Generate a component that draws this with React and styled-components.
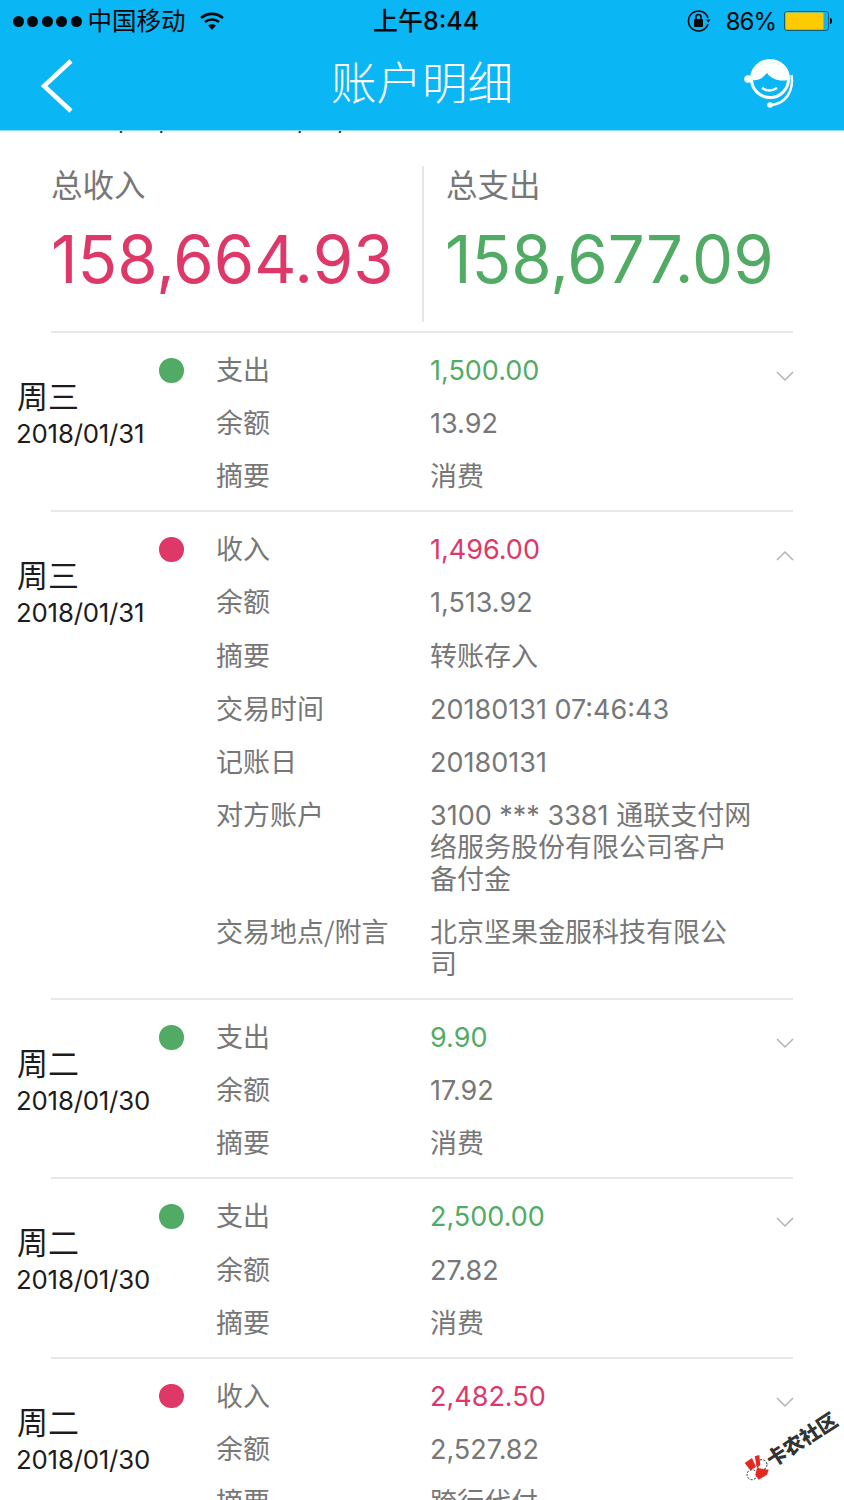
import React from "react";
import styled, { createGlobalStyle } from "styled-components";

const CJK = `"Noto Sans CJK SC", sans-serif`;
const FONT = `"Inter", "Noto Sans CJK SC", sans-serif`;
const RED = "#de3868";
const GREEN = "#52ab64";

const Global = createGlobalStyle`
  html, body { margin: 0; padding: 0; background: #fff; }
  * { box-sizing: border-box; }
`;

const Page = styled.div`
  position: relative;
  width: 844px;
  height: 1500px;
  overflow: hidden;
  background: #fff;
  font-family: ${FONT};
`;

const Header = styled.header`
  height: 131px;
  background: #0bb6f5;
  border-bottom: 1px solid #8fdcf9;
`;

const StatusBar = styled.div`
  height: 42px;
  display: grid;
  grid-template-columns: 1fr auto 1fr;
  align-items: center;
  color: #05080a;
`;

const StatusLeft = styled.div`
  display: flex;
  align-items: center;
  padding-left: 13px;
`;

const Dots = styled.div`
  display: flex;
  gap: 3.4px;
  margin-right: 6px;
`;

const Dot = styled.span`
  width: 11px;
  height: 11px;
  border-radius: 50%;
  background: #05080a;
`;

const Carrier = styled.span`
  font-size: 24.5px;
  font-family: ${CJK};
  line-height: 28px;
  padding-bottom: 2px;
  margin-right: 13px;
`;

const Clock = styled.div`
  font-size: 25px;
  font-weight: 500;
  line-height: 30px;
  padding-left: 8px;
`;

const StatusRight = styled.div`
  display: flex;
  align-items: center;
  justify-content: flex-end;
  padding-right: 12px;
`;

const Percent = styled.span`
  font-size: 24px;
  letter-spacing: -1px;
  margin: 0 8px 0 15px;
`;

const Nav = styled.div`
  height: 88px;
  display: grid;
  grid-template-columns: 1fr auto 1fr;
  align-items: center;
`;

const BackWrap = styled.div`
  display: flex;
  padding-left: 40px;
`;

const Title = styled.h1`
  margin: 0;
  font-family: ${CJK};
  font-size: 45.5px;
  font-weight: 300;
  color: #fff;
  line-height: 50px;
  padding-bottom: 12px;
`;

const HelpWrap = styled.div`
  display: flex;
  justify-content: flex-end;
  padding: 0 48px 8px 0;
`;

const ClippedRange = styled.div`
  height: 3px;
  overflow: hidden;
  display: flex;
  gap: 34px;
  padding-left: 55px;
  font-size: 26px;
  letter-spacing: 1.3px;
  color: #333;
`;

const ClippedDate = styled.span`
  display: block;
  line-height: 30px;
  margin-top: -25px;
`;

const Summary = styled.section`
  display: grid;
  grid-template-columns: 422px 1fr;
  margin-top: 32px;
  height: 156px;
`;

const SummaryCell = styled.div`
  padding-left: ${(p) => (p.$right ? 22 : 51)}px;
  border-left: ${(p) => (p.$right ? "2px solid #e6e6e6" : "none")};
`;

const SummaryLabel = styled.div`
  font-family: ${CJK};
  font-size: 31.5px;
  line-height: 34px;
  color: #777;
`;

const SummaryValue = styled.div`
  margin-top: 23px;
  margin-left: ${(p) => (p.$right ? -1 : 0)}px;
  font-size: 65.3px;
  line-height: 74px;
  white-space: nowrap;
  color: ${(p) => p.$color};
`;

const Rule = styled.hr`
  margin: ${(p) => p.$top || 0}px 51px 0;
  border: 0;
  height: 2px;
  background: #e8e8e8;
`;

const Entry = styled.article`
  display: grid;
  grid-template-columns: 159px 58px 214px 345px 1fr;
  padding: 22px 0 17px;
`;

const DateCol = styled.div`
  padding: 22px 0 0 17px;
  color: #1c1c1c;
`;

const Weekday = styled.div`
  font-family: ${CJK};
  font-size: 31px;
  line-height: 36px;
`;

const DateText = styled.div`
  margin-left: -1px;
  font-size: 25.8px;
  line-height: 42px;
  letter-spacing: -0.2px;
  white-space: nowrap;
`;

const Marker = styled.span`
  display: block;
  width: 24.5px;
  height: 24.5px;
  margin-top: 3px;
  border-radius: 50%;
  background: ${(p) => p.$color};
`;

const Fields = styled.dl`
  grid-column: 3 / 5;
  margin: 0;
  display: grid;
  grid-template-columns: 214px 1fr;
  row-gap: 21.15px;
`;

const Label = styled.dt`
  font-family: ${CJK};
  font-size: 27px;
  line-height: 28px;
  padding-bottom: 4px;
  margin-left: -1px;
  color: #777;
  white-space: nowrap;
`;

const Value = styled.dd`
  margin: 0 0 0 -1px;
  max-width: 322px;
  font-size: 27px;
  line-height: 32px;
  color: ${(p) => p.$color || "#777"};
`;

const Chevron = styled.svg`
  display: block;
  margin-top: 16px;
`;

const Watermark = styled.div`
  position: absolute;
  left: 744px;
  top: 1453px;
  display: flex;
  align-items: center;
  gap: 0;
  transform: rotate(-33deg);
  transform-origin: 13px 15px;
`;

const WatermarkText = styled.span`
  font-family: ${CJK};
  font-size: 20px;
  font-weight: 900;
  color: #333;
  line-height: 30px;
  white-space: nowrap;
`;

const entries = [
  { day: "周三", date: "2018/01/31", color: GREEN, rows: [["支出", "1,500.00"], ["余额", "13.92"], ["摘要", "消费"]] },
  {
    day: "周三", date: "2018/01/31", color: RED, open: true,
    rows: [
      ["收入", "1,496.00"], ["余额", "1,513.92"], ["摘要", "转账存入"],
      ["交易时间", "20180131 07:46:43"], ["记账日", "20180131"],
      ["对方账户", "3100 *** 3381 通联支付网络服务股份有限公司客户备付金"],
      ["交易地点/附言", "北京坚果金服科技有限公司"],
    ],
  },
  { day: "周二", date: "2018/01/30", color: GREEN, rows: [["支出", "9.90"], ["余额", "17.92"], ["摘要", "消费"]] },
  { day: "周二", date: "2018/01/30", color: GREEN, rows: [["支出", "2,500.00"], ["余额", "27.82"], ["摘要", "消费"]] },
  { day: "周二", date: "2018/01/30", color: RED, rows: [["收入", "2,482.50"], ["余额", "2,527.82"], ["摘要", "跨行代付"]] },
];

const WifiIcon = () => (
  <svg width="26" height="20" viewBox="0 0 26 20" fill="none" stroke="#05080a" strokeWidth="2.6">
    <path d="M2 7c6.5-5.5 15.500-5.500 22 0" />
    <path d="M6 11c4-3.400 10-3.400 14 0" />
    <path d="M13 19l-4-4.500c2.300-1.700 5.700-1.700 8 0z" fill="#05080a" stroke="none" />
  </svg>
);

const LockIcon = () => (
  <svg width="24" height="24" viewBox="0 0 24 24" fill="none">
    <path d="M21 15a10 10 0 1 1 0-6" stroke="#05080a" strokeWidth="1.500" />
    <path d="M19 10.500l4.500 0-2.200 3z" fill="#05080a" />
    <rect x="7" y="10" width="9" height="8" rx="1" fill="#05080a" />
    <path d="M9 10V8a2.500 2.500 0 0 1 5 0v2" stroke="#05080a" strokeWidth="1.600" />
  </svg>
);

const BatteryIcon = () => (
  <svg width="48" height="20" viewBox="0 0 48 20">
    <rect x="0.500" y="0.500" width="44" height="19" rx="2.500" fill="none" stroke="#0f5f80" />
    <rect x="1.500" y="1.500" width="38" height="17" rx="1" fill="#fdcb00" />
    <path d="M46 7c1.500 0 2 1 2 3s-.5 3-2 3z" fill="#05080a" />
  </svg>
);

const BackIcon = () => (
  <svg width="34" height="54" viewBox="0 0 34 54" fill="none" stroke="#fff" strokeWidth="4.500">
    <path d="M31 2L4 27l27 25" />
  </svg>
);

const HelpIcon = () => (
  <svg width="52" height="54" viewBox="0 0 52 54" fill="none">
    <circle cx="26" cy="24" r="18.500" stroke="#fff" strokeWidth="3" />
    <path d="M8 25A18 18 0 0 1 44 25C36 27 27 24 23 18 19 23 14 26 8 25z" fill="#fff" />
    <circle cx="4" cy="24" r="3.800" fill="#fff" />
    <path d="M18 33Q25.500 38 33 33" stroke="#fff" strokeWidth="2.500" />
    <path d="M47.500 20C50 36 42 48 28 50" stroke="#fff" strokeWidth="2.500" />
    <circle cx="26" cy="50" r="2.800" fill="#fff" />
  </svg>
);

const ChevronIcon = ({ open }) => (
  <Chevron width="18" height="11" viewBox="0 0 18 11" fill="none" stroke="#b3b3b3" strokeWidth="1.500">
    <path d={open ? "M1 10l8-8 8 8" : "M1 1l8 8 8-8"} />
  </Chevron>
);

const WatermarkLogo = () => (
  <svg width="26" height="26" viewBox="0 0 26 26" style={{ overflow: "visible" }}>
    <g transform="rotate(33 13 13)">
      <circle cx="18" cy="9.700" r="5" fill="#fff" stroke="#222" strokeDasharray="2 1.500" />
      <circle cx="8" cy="19.700" r="5" fill="#fff" stroke="#222" strokeDasharray="2 1.500" />
      <path d="M.7 8L8 3l4 9-5.700 3.300z" fill="#e5281f" />
      <path d="M10.700 1.300L15.300 0l1 10L13 13z" fill="#e5281f" />
      <path d="M13 13l11.700 1.700-1.700 5-8.300 5-3.400-5z" fill="#e5281f" />
    </g>
  </svg>
);

export default function App() {
  return (
    <Page>
      <Global />
      <Header>
        <StatusBar>
          <StatusLeft>
            <Dots>{[0, 1, 2, 3, 4].map((i) => <Dot key={i} />)}</Dots>
            <Carrier>中国移动</Carrier>
            <WifiIcon />
          </StatusLeft>
          <Clock>上午8:44</Clock>
          <StatusRight>
            <LockIcon />
            <Percent>86%</Percent>
            <BatteryIcon />
          </StatusRight>
        </StatusBar>
        <Nav>
          <BackWrap><BackIcon /></BackWrap>
          <Title>账户明细</Title>
          <HelpWrap><HelpIcon /></HelpWrap>
        </Nav>
      </Header>
      <ClippedRange>
        <ClippedDate>2018/01/01</ClippedDate>
        <ClippedDate>2018/01/31</ClippedDate>
      </ClippedRange>
      <Summary>
        <SummaryCell>
          <SummaryLabel>总收入</SummaryLabel>
          <SummaryValue $color={RED}>158,664.93</SummaryValue>
        </SummaryCell>
        <SummaryCell $right>
          <SummaryLabel>总支出</SummaryLabel>
          <SummaryValue $right $color={GREEN}>158,677.09</SummaryValue>
        </SummaryCell>
      </Summary>
      <Rule $top={9} />
      {entries.map((e, i) => (
        <React.Fragment key={i}>
          {i > 0 && <Rule />}
          <Entry>
            <DateCol>
              <Weekday>{e.day}</Weekday>
              <DateText>{e.date}</DateText>
            </DateCol>
            <div><Marker $color={e.color} /></div>
            <Fields>
              {e.rows.map(([k, v], j) => (
                <React.Fragment key={k}>
                  <Label>{k}</Label>
                  <Value $color={j === 0 ? e.color : undefined}>{v}</Value>
                </React.Fragment>
              ))}
            </Fields>
            <div><ChevronIcon open={e.open} /></div>
          </Entry>
        </React.Fragment>
      ))}
      <Watermark>
        <WatermarkLogo />
        <WatermarkText>卡农社区</WatermarkText>
      </Watermark>
    </Page>
  );
}
